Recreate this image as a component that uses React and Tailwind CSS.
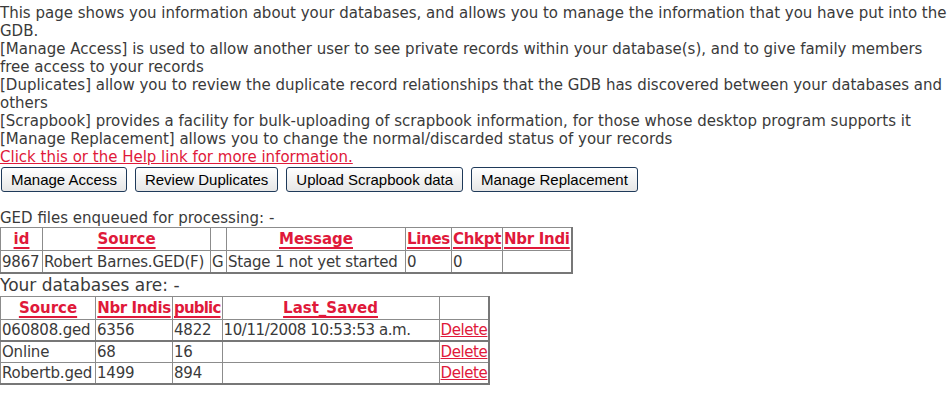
import { Fragment } from "react";

/* ===============================
   DATA
================================ */
const queue = [
    {
        id: "9867",
        source: "Robert Barnes.GED(F)",
        flag: "G",
        message: "Stage 1 not yet started",
        lines: "0",
        chkpt: "0",
        indi: "",
    },
];

const databases = [
    { source: "060808.ged", indis: "6356", pub: "4822", saved: "10/11/2008 10:53:53 a.m." },
    { source: "Online", indis: "68", pub: "16", saved: "" },
    { source: "Robertb.ged", indis: "1499", pub: "894", saved: "" },
];

const buttons = [
    "Manage Access",
    "Review Duplicates",
    "Upload Scrapbook data",
    "Manage Replacement",
];

/* ===============================
   SMALL PIECES
================================ */
function Th({ children, className = "" }) {
    return (
        <th
            className={`border border-[#8c8c8c] px-[1px] py-[2px] text-center font-bold text-[15px] leading-[18px] whitespace-nowrap ${className}`}
        >
            {children && (
                <a href="#" className="text-[#e0193a] underline decoration-2 underline-offset-[3px]">
                    {children}
                </a>
            )}
        </th>
    );
}

function Td({ children, className = "" }) {
    return (
        <td className={`border border-[#8c8c8c] px-[1px] text-left align-top whitespace-nowrap tracking-[-0.2px] ${className}`}>
            {children}
        </td>
    );
}

function Button({ label }) {
    return (
        <button className="h-[25px] rounded-[3px] border border-[#1f3a5a] bg-gradient-to-b from-white to-[#e6e6e6] px-[9px] font-['Liberation_Sans',Arial,sans-serif] text-[15px] leading-[18px] text-black">
            {label}
        </button>
    );
}

/* ===============================
   PAGE
================================ */
export default function App() {
    return (
        <div className="bg-white min-h-[401px] pt-[4px] font-['DejaVu_Sans',Verdana,sans-serif] text-[15px] leading-[18px] text-[#3a3a3a]">
            <div>
                This page shows you information about your databases, and allows you to manage the information that you have put into the GDB.
                <br />
                [Manage Access] is used to allow another user to see private records within your database(s), and to give family members free access to your records
                <br />
                [Duplicates] allow you to review the duplicate record relationships that the GDB has discovered between your databases and others
                <br />
                [Scrapbook] provides a facility for bulk-uploading of scrapbook information, for those whose desktop program supports it
                <br />
                [Manage Replacement] allows you to change the normal/discarded status of your records
                <br />
                <a href="#" className="text-[#e0193a] underline">
                    Click this or the Help link for more information.
                </a>
            </div>

            {/* buttons */}
            <div className="mt-[1px] flex gap-[8px] pl-[1px]">
                {buttons.map((b) => (
                    <Button key={b} label={b} />
                ))}
            </div>

            {/* queue */}
            <div className="mt-[17px]">GED files enqueued for processing: -</div>
            <table className="border-collapse border-r-2 border-b-2 border-[#777]">
                <thead>
                    <tr>
                        <Th className="w-[42px]">id</Th>
                        <Th className="w-[168px]">Source</Th>
                        <Th className="w-[16px]"></Th>
                        <Th className="w-[179px]">Message</Th>
                        <Th className="tracking-[-0.3px]">Lines</Th>
                        <Th className="tracking-[-0.3px]">Chkpt</Th>
                        <Th className="tracking-[-0.3px]">Nbr Indi</Th>
                    </tr>
                </thead>
                <tbody>
                    {queue.map((q) => (
                        <tr key={q.id}>
                            <Td className="py-[1.5px]">{q.id}</Td>
                            <Td className="py-[1.5px]">{q.source}</Td>
                            <Td className="py-[1.5px]">{q.flag}</Td>
                            <Td className="py-[1.5px]">{q.message}</Td>
                            <Td className="py-[1.5px]">{q.lines}</Td>
                            <Td className="py-[1.5px]">{q.chkpt}</Td>
                            <Td className="py-[1.5px]">{q.indi}</Td>
                        </tr>
                    ))}
                </tbody>
            </table>

            {/* databases */}
            <div className="text-[17px] leading-[22px]">Your databases are: -</div>
            <table className="border-collapse border-r-2 border-b-2 border-[#777]">
                <thead>
                    <tr>
                        <Th className="w-[95px]">Source</Th>
                        <Th className="w-[77px] tracking-[-0.4px]">Nbr Indis</Th>
                        <Th className="tracking-[-0.8px]">public</Th>
                        <Th className="w-[217px]">Last_Saved</Th>
                        <Th className="w-[49px]"></Th>
                    </tr>
                </thead>
                <tbody>
                    {databases.map((d, i) => (
                        <Fragment key={d.source}>
                            <tr className={i === 0 ? "border-b-2 border-[#777]" : ""}>
                                <Td className="py-[1px]">{d.source}</Td>
                                <Td className="py-[1px]">{d.indis}</Td>
                                <Td className="py-[1px]">{d.pub}</Td>
                                <Td className="py-[1px] tracking-[-0.4px]">{d.saved}</Td>
                                <Td className="py-[1px] tracking-[-0.4px]">
                                    <a href="#" className="text-[#e0193a] underline">
                                        Delete
                                    </a>
                                </Td>
                            </tr>
                        </Fragment>
                    ))}
                </tbody>
            </table>
        </div>
    );
}
